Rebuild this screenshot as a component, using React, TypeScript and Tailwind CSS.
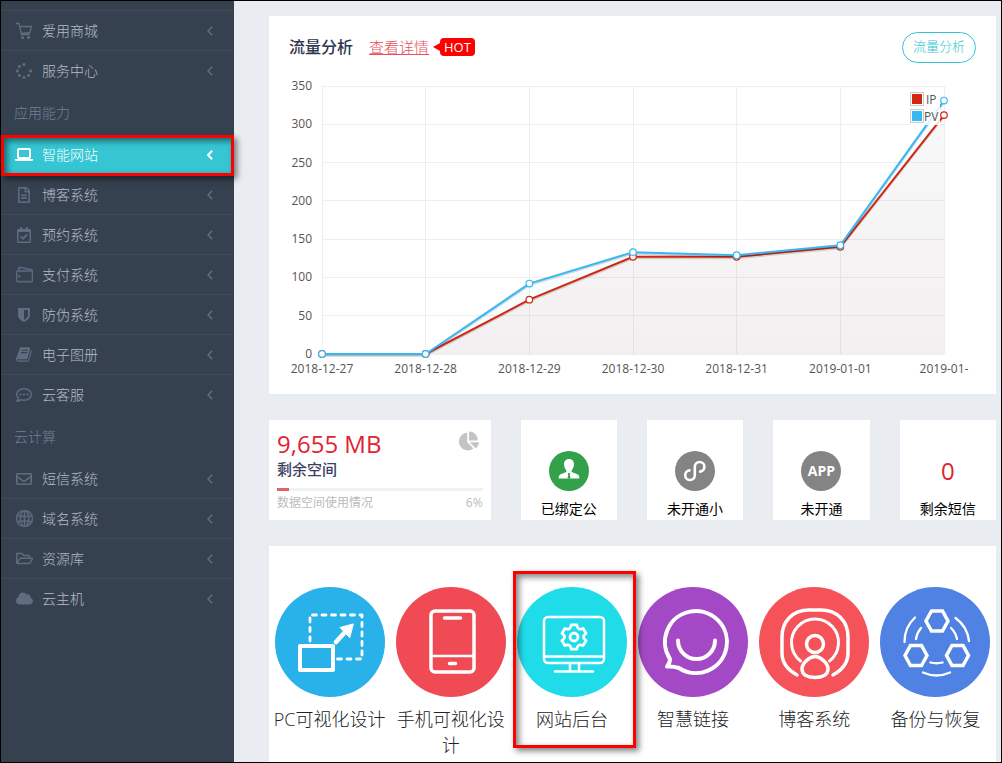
import type { ReactNode } from "react";
import {
  FaChartPie,
  FaCloud,
  FaRegCalendarCheck,
  FaRegCommentDots,
  FaRegEnvelope,
  FaRegFileAlt,
  FaRegFolderOpen,
  FaSpinner,
} from "react-icons/fa";
import { SlGlobe, SlWallet } from "react-icons/sl";

type MenuItem = {
  name: string;
  icon: ReactNode;
  active?: boolean;
};

type MenuGroup = {
  heading?: string;
  items: MenuItem[];
};

const CartIcon = () => (
  <svg viewBox="0 0 18 18" className="w-[18px] h-[18px]" fill="none">
    <path
      d="M1 1.500h3l2.500 11h8.500M5 4.500h11.500l-1.500 6-8.500 1"
      stroke="currentColor"
      strokeWidth="1.300"
      strokeLinejoin="round"
    />
    <circle cx="7.500" cy="15.500" r="1.500" fill="currentColor" />
    <circle cx="13.500" cy="15.500" r="1.500" fill="currentColor" />
  </svg>
);

const LaptopIcon = () => (
  <svg viewBox="0 0 18 14" className="w-[18px] h-[14px]" fill="none">
    <rect x="3" y="1" width="12" height="9" rx="1" stroke="currentColor" strokeWidth="2" />
    <path d="M0 11h18v1q0 1-1.500 1h-15Q0 13 0 12z" fill="currentColor" />
  </svg>
);

const ShieldIcon = () => (
  <svg viewBox="0 0 14 16" className="w-[14px] h-4">
    <path
      fill="currentColor"
      fillRule="evenodd"
      d="M1 1h12v7c0 3.500-3 5.600-6 7-3-1.400-6-3.500-6-7zM7 3v9.800c2.200-1.200 4-2.700 4-4.800V3z"
    />
  </svg>
);

const BookIcon = () => (
  <svg viewBox="0 0 1792 1792" className="w-[17px] h-[17px]">
    <path
      fill="currentColor"
      d="M1639 478q40 57 18 129l-275 906q-19 64-76.500 107.500t-122.500 43.500h-923q-77 0-148.500-53.500t-99.500-131.500q-24-67-2-127 0-4 3-27t4-37q1-8-3-21.500t-3-19.500q2-11 8-21t16.500-23.500 16.500-23.500q23-38 45-91.500t30-91.500q3-10 .5-30t-.5-28q3-11 17-28t17-23q21-36 42-92t25-90q1-9-2.500-32t.5-28q4-13 22-30.500t22-22.500q19-26 42.500-84.500t27.500-96.500q1-8-3-25.500t-2-26.500q2-8 9-18t18-23 17-21q8-12 16.500-30.500t15-35 16-36 19.500-32 26.500-23.500 36-11.500 47.500 5.500l-1 3q38-9 51-9h761q74 0 114 56t18 130l-274 906q-36 119-71.500 153.500t-128.500 34.500h-869q-27 0-38 15-11 16-1 43 24 70 144 70h923q29 0 56-15.500t35-41.500l300-987q7-22 5-57 38 15 59 43zm-1064 2q-4 13 2 22.500t20 9.500h608q13 0 25.500-9.500t16.500-22.500l21-64q4-13-2-22.500t-20-9.500h-608q-13 0-25.500 9.500t-16.500 22.500zm-83 256q-4 13 2 22.500t20 9.500h608q13 0 25.500-9.500t16.500-22.500l21-64q4-13-2-22.500t-20-9.500h-608q-13 0-25.500 9.500t-16.500 22.500z"
    />
  </svg>
);

const Chevron = ({ active }: { active?: boolean }) => (
  <svg
    viewBox="0 0 6 10"
    className={active ? "w-1.5 h-2.5 stroke-white stroke-2" : "w-1.5 h-2.5 stroke-[#606c80] stroke-[1.5px]"}
    fill="none"
  >
    <path d="M5.200.8 1 5l4.200 4.200" />
  </svg>
);

const menu: MenuGroup[] = [
  {
    items: [
      { name: "爱用商城", icon: <CartIcon /> },
      { name: "服务中心", icon: <FaSpinner size={16} /> },
    ],
  },
  {
    heading: "应用能力",
    items: [
      { name: "智能网站", icon: <LaptopIcon />, active: true },
      { name: "博客系统", icon: <FaRegFileAlt size={16} /> },
      { name: "预约系统", icon: <FaRegCalendarCheck size={16} /> },
      { name: "支付系统", icon: <SlWallet size={17} strokeWidth={30} /> },
      { name: "防伪系统", icon: <ShieldIcon /> },
      { name: "电子图册", icon: <BookIcon /> },
      { name: "云客服", icon: <FaRegCommentDots size={16} /> },
    ],
  },
  {
    heading: "云计算",
    items: [
      { name: "短信系统", icon: <FaRegEnvelope size={16} /> },
      { name: "域名系统", icon: <SlGlobe size={17} strokeWidth={30} /> },
      { name: "资源库", icon: <FaRegFolderOpen size={17} /> },
      { name: "云主机", icon: <FaCloud size={17} /> },
    ],
  },
];

// red frame that points the user at a step
const Highlight = ({ className }: { className: string }) => (
  <span
    className={`absolute z-10 pointer-events-none border-3 border-[#ff0000] shadow-[3px_3px_6px_rgba(0,0,0,0.5),inset_3px_3px_6px_rgba(0,0,0,0.5)] ${className}`}
  />
);

const SidebarItem = ({ item, line }: { item: MenuItem; line: boolean }) => {
  return (
    <li className="relative">
      <a
        href="#"
        className={`flex items-center h-10 pl-[13px] pr-[21px] border-t bg-clip-padding text-sm font-light ${
          line ? "border-[#3f4b5a]" : "border-transparent"
        } ${item.active ? "bg-[#36c6d3] text-white" : "text-[#b4bcc8]"}`}
      >
        <span
          className={`w-5 flex items-center justify-center shrink-0 ${
            item.active ? "text-white" : "text-[#606c80]"
          }`}
        >
          {item.icon}
        </span>
        <span className="ml-2 flex-1">{item.name}</span>
        <Chevron active={item.active} />
      </a>
      {item.active && <Highlight className="inset-x-0 -bottom-0.5 top-px" />}
    </li>
  );
};

const Sidebar = () => {
  return (
    <nav className="w-[233px] shrink-0 bg-[#364150] pt-[9px]">
      {menu.map((group, g) => (
        <div key={g}>
          {group.heading && (
            <h3 className="h-11 flex items-center pl-[13px] pt-0.5 text-sm font-light text-[#708096]">
              {group.heading}
            </h3>
          )}
          <ul>
            {group.items.map((item, i) => (
              <SidebarItem key={item.name} item={item} line={g === 0 || i > 0} />
            ))}
          </ul>
        </div>
      ))}
    </nav>
  );
};

const days = [
  "2018-12-27",
  "2018-12-28",
  "2018-12-29",
  "2018-12-30",
  "2018-12-31",
  "2019-01-01",
  "2019-01-",
];
const ip = [0, 0, 71, 127, 127, 140, 312];
const pv = [0, 0, 92, 133, 129, 142, 331];
const ticks = [0, 50, 100, 150, 200, 250, 300, 350];

const LEFT = 53;
const RIGHT = 675;
const TOP = 10;
const BOTTOM = 278;

const px = (i: number) => LEFT + (i * (RIGHT - LEFT)) / (days.length - 1);
const py = (v: number) => BOTTOM - (v * (BOTTOM - TOP)) / 350;
const toPoints = (data: number[]) => data.map((v, i) => `${px(i)},${py(v)}`).join(" ");

const Series = ({ data, color }: { data: number[]; color: string }) => (
  <g fill="none">
    <polyline
      points={toPoints(data)}
      stroke="#000"
      strokeOpacity="0.15"
      strokeWidth="2"
      transform="translate(0 1.5)"
    />
    <polyline points={toPoints(data)} stroke={color} strokeWidth="2" />
    {data.map((v, i) => (
      <circle key={i} cx={px(i)} cy={py(v)} r="3.300" fill="#fff" stroke={color} strokeWidth="1.200" />
    ))}
  </g>
);

const TrafficChart = () => {
  return (
    <svg viewBox="0 0 727 318" className="block w-full text-xs" role="img" aria-label="流量分析">
      <defs>
        <linearGradient id="area" x1="0" y1="0" x2="0" y2="1">
          <stop offset="0" stopColor="#6e5560" stopOpacity="0.04" />
          <stop offset="1" stopColor="#6e5566" stopOpacity="0.09" />
        </linearGradient>
      </defs>
      <g stroke="#eee" shapeRendering="crispEdges">
        {ticks.map((t) => (
          <line key={t} x1={LEFT} x2={RIGHT} y1={py(t)} y2={py(t)} />
        ))}
        {days.map((d, i) => (
          <line key={d} x1={px(i)} x2={px(i)} y1={TOP} y2={BOTTOM} />
        ))}
      </g>
      <polygon
        points={`${toPoints(pv)} ${toPoints(ip).split(" ").reverse().join(" ")}`}
        fill="#37b7f3"
        fillOpacity="0.04"
      />
      <polygon points={`${toPoints(ip)} ${RIGHT},${BOTTOM}`} fill="url(#area)" />
      <Series data={ip} color="#d12610" />
      <Series data={pv} color="#37b7f3" />
      <g fill="#545454">
        {ticks.map((t) => (
          <text key={t} x="43" y={py(t) + 4} textAnchor="end">
            {t}
          </text>
        ))}
        {days.map((d, i) => (
          <text key={d} x={px(i)} y="297" textAnchor="middle">
            {d}
          </text>
        ))}
      </g>
      <rect x="640" y="15" width="31" height="34" fill="#fff" fillOpacity="0.85" />
      <g stroke="#ccc" fill="#fff">
        <rect x="641.500" y="16.500" width="13" height="13" />
        <rect x="641.500" y="33.500" width="13" height="13" />
      </g>
      <rect x="643" y="18" width="10" height="10" fill="#d12610" />
      <rect x="643" y="35" width="10" height="10" fill="#37b7f3" />
      <g fill="#545454">
        <text x="657" y="28">IP</text>
        <text x="655" y="45">PV</text>
      </g>
    </svg>
  );
};

const TrafficCard = () => {
  return (
    <section className="bg-white">
      <div className="flex items-center h-15 px-5 pt-0.5">
        <h2 className="text-base font-medium text-[#2f3550]">流量分析</h2>
        <a href="#" className="ml-4 text-[15px] font-light text-[#e7505a] underline">
          查看详情
        </a>
        <span className="ml-1 flex items-center">
          <span className="border-y-4 border-y-transparent border-r-[7px] border-r-[#ff0000]" />
          <span className="bg-[#ff0000] text-white text-[13px] leading-[18px] px-1 rounded">
            HOT
          </span>
        </span>
        <button
          type="button"
          className="ml-auto h-[31px] px-2.5 rounded-full border border-[#32c5d2] text-[13px] font-light text-[#32c5d2]"
        >
          流量分析
        </button>
      </div>
      <TrafficChart />
    </section>
  );
};

const StorageCard = () => {
  return (
    <section className="bg-white px-2 pt-3">
      <div className="flex justify-between">
        <div>
          <p className="text-2xl leading-6 text-[#e12330]">9,655 MB</p>
          <h3 className="text-[15px] leading-[26px] font-medium text-[#3b3f61]">剩余空间</h3>
        </div>
        <FaChartPie size={20} className="mr-1 -mt-px text-[#c4c4c4]" />
      </div>
      <div className="mt-1.5 h-[3px] bg-[#f2f2f2]">
        <div className="h-full bg-[#e0636c]" style={{ width: "6%" }} />
      </div>
      <div className="flex justify-between text-xs leading-6 text-[#bbb]">
        <span>数据空间使用情况</span>
        <span>6%</span>
      </div>
    </section>
  );
};

const StatusCard = ({ icon, label }: { icon: ReactNode; label: string }) => {
  return (
    <section className="h-[100px] bg-white flex flex-col items-center pt-[31px] overflow-hidden">
      {icon}
      <p className="mt-2 text-sm text-black whitespace-nowrap">{label}</p>
    </section>
  );
};

const UserBadge = () => (
  <svg viewBox="0 0 40 40" className="w-10 h-10 shrink-0">
    <circle cx="20" cy="20" r="20" fill="#32a14a" />
    <path
      fill="#fff"
      d="M20 8c3.200 0 5.200 2.400 5 5.700-.2 2.600-1.300 4.500-2.300 5.500v1.900l6.200 2.500q1.500.7 1.500 3.900H9.600q0-3.200 1.500-3.900l6.200-2.500v-1.900c-1-1-2.100-2.900-2.300-5.500C14.800 10.400 16.800 8 20 8z"
    />
    <path d="m20 21.500 1.300 1.500-.6 1 .8 2.500-1.500 1.500-1.500-1.500.8-2.500-.6-1z" fill="#32a14a" />
  </svg>
);

const MiniProgramBadge = () => (
  <svg viewBox="0 0 40 40" className="w-10 h-10 shrink-0" fill="none">
    <circle cx="20" cy="20" r="20" fill="#848484" />
    <path
      d="M14.500 19.400a4.800 4.800 0 1 0 5.300 4.800v-8.400a4.800 4.800 0 1 1 5.300 4.800"
      stroke="#fff"
      strokeWidth="2.600"
      strokeLinecap="round"
    />
  </svg>
);

const PcIcon = () => (
  <>
    <path d="M35 54V28h52v44H61" strokeWidth="2.800" strokeDasharray="4 5.500" />
    <rect x="25" y="59" width="33" height="24" strokeWidth="4" />
    <path d="m61 55 10-11" strokeWidth="4.500" />
    <path d="m78 37-13 3.500 9.500 10z" fill="#fff" strokeWidth="1" />
  </>
);

const PhoneIcon = () => (
  <>
    <rect x="35" y="24" width="43" height="61" rx="4" strokeWidth="3.500" />
    <path d="M36 69h41" strokeWidth="2.500" />
    <path d="M48.500 31h16M53.500 76.500h6" strokeWidth="3.500" />
  </>
);

// six-toothed cog, a quadratic dip between each pair of teeth
const at = (deg: number, r: number) => {
  const a = (deg * Math.PI) / 180;
  return `${(57 + r * Math.sin(a)).toFixed(1)} ${(50 - r * Math.cos(a)).toFixed(1)}`;
};
const cog =
  [0, 60, 120, 180, 240, 300]
    .map((d, i) => `${i ? "L" : "M"}${at(d - 13, 12.5)}L${at(d + 13, 12.5)}Q${at(d + 30, 7)} ${at(d + 47, 12.5)}`)
    .join("") + "z";

const MonitorIcon = () => (
  <>
    <rect x="27" y="30" width="60" height="46" rx="4" strokeWidth="2.500" />
    <path d="M28 69.500h58M53 77v7M62 77v7M38 84.500h38" strokeWidth="2.500" />
    <path d={cog} strokeWidth="2.800" />
    <circle cx="57" cy="50" r="4" strokeWidth="2.800" />
  </>
);

const SmileIcon = () => (
  <>
    <path d="M32 72a31 31 0 1 1 9 9q-6-2-12-1.500 3-3.500 3-7.500z" strokeWidth="4" />
    <path d="M40 53.500a18.500 18.500 0 0 0 37 0" strokeWidth="4" />
  </>
);

const PodcastIcon = () => (
  <>
    <path d="M38 88C27 82 23 74 23 66V50c0-16 11-27 27-27h12c16 0 27 11 27 27v16c0 8-4 16-15 22" strokeWidth="3.500" />
    <path d="M41.500 74a23.500 23.500 0 1 1 29 0" strokeWidth="3" />
    <circle cx="56" cy="57" r="8.500" strokeWidth="3.500" />
    <path d="M56 69.500c6 0 13 7 13 12.500 0 6-6 8.500-13 8.500S43 88 43 82c0-5.500 7-12.500 13-12.500z" strokeWidth="3.500" />
  </>
);

const HexIcon = () => (
  <>
    <g strokeWidth="3.500" strokeLinejoin="miter">
      <path d="M51.500 24h11l5.500 10-5.500 10h-11L46 34z" />
      <path d="M30.500 58.500h11l5.500 10-5.500 10h-11l-5.500-10z" />
      <path d="M72 58.500h11l5.500 10-5.500 10H72l-5.500-10z" />
    </g>
    <path
      d="M24.500 55A33 33 0 0 1 35 30.500M75.500 31A33 33 0 0 1 89 54M36 52a22 22 0 0 1 5-11M71 41a22 22 0 0 1 6 11M50.500 75.500q6 1.500 12 0M43 85.500q13.500 6 27 0"
      strokeWidth="2.300"
    />
  </>
);

type AppLink = {
  name: string;
  color: string;
  icon: ReactNode;
  highlight?: boolean;
};

const apps: AppLink[] = [
  { name: "PC可视化设计", color: "fill-[#29b1ea]", icon: <PcIcon /> },
  { name: "手机可视化设计", color: "fill-[#f04b55]", icon: <PhoneIcon /> },
  { name: "网站后台", color: "fill-[#20dce9]", icon: <MonitorIcon />, highlight: true },
  { name: "智慧链接", color: "fill-[#a449c5]", icon: <SmileIcon /> },
  { name: "博客系统", color: "fill-[#f5525a]", icon: <PodcastIcon /> },
  { name: "备份与恢复", color: "fill-[#5082e4]", icon: <HexIcon /> },
];

const AppTile = ({ app }: { app: AppLink }) => {
  return (
    <a href="#" className="relative flex flex-col items-center text-center">
      <svg
        viewBox="0 0 110 110"
        className="w-[110px] h-[110px]"
        fill="none"
        stroke="#fff"
        strokeLinecap="round"
        strokeLinejoin="round"
      >
        <circle cx="55" cy="55" r="55" stroke="none" className={app.color} />
        {app.icon}
      </svg>
      <span className="mt-[9px] text-lg leading-[26px] font-light text-[#222]">{app.name}</span>
      {app.highlight && <Highlight className="-top-4 h-[177px] left-0.5 -right-1" />}
    </a>
  );
};

const App = () => {
  return (
    <div className="min-h-screen flex border border-black bg-[#e9ecf1] font-['Open_Sans','Noto_Sans_CJK_SC',sans-serif]">
      <Sidebar />
      <main className="flex-1 min-w-0 flex flex-col gap-[26px] pt-[15px] pl-[35px] pr-[5px]">
        <TrafficCard />
        <div className="grid grid-cols-[2.3fr_1fr_1fr_1fr_1fr] gap-[30px]">
          <StorageCard />
          <StatusCard icon={<UserBadge />} label="已绑定公" />
          <StatusCard icon={<MiniProgramBadge />} label="未开通小" />
          <StatusCard
            icon={
              <span className="w-10 h-10 shrink-0 rounded-full bg-[#848484] text-white text-sm font-bold flex items-center justify-center">
                APP
              </span>
            }
            label="未开通"
          />
          <StatusCard
            icon={<span className="h-10 leading-10 text-2xl text-[#e12330]">0</span>}
            label="剩余短信"
          />
        </div>
        <section className="flex-1 bg-white pt-[41px]">
          <div className="grid grid-cols-6">
            {apps.map((app) => (
              <AppTile key={app.name} app={app} />
            ))}
          </div>
        </section>
      </main>
    </div>
  );
};

export default App;
